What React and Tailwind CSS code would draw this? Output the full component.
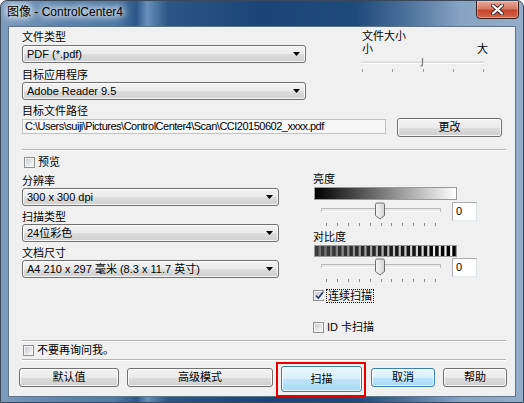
import React from 'react'

const btn =
  'border border-[#707070] rounded-[3px] bg-[linear-gradient(#f2f2f2_0%,#ebebeb_50%,#dddddd_51%,#cfcfcf_100%)] shadow-[inset_0_0_0_1px_rgba(255,255,255,0.8)]'
const blueBtn =
  'border border-[#3c7fb1] rounded-[3px] bg-[linear-gradient(#eaf6fd_0%,#d9f0fc_50%,#bee6fd_51%,#a7d9f5_100%)] shadow-[inset_0_0_0_1px_rgba(255,255,255,0.7)]'

function Combo({ text, className }) {
  return (
    <div className={`h-[18px] flex items-center justify-between pl-[4px] pr-[5px] ${btn} ${className}`}>
      <span className="leading-none">{text}</span>
      <svg width="7" height="4" viewBox="0 0 7 4">
        <path d="M0 0h7L3.5 4z" fill="#000" />
      </svg>
    </div>
  )
}

function Button({ children, className, blue }) {
  return (
    <div className={`flex items-center justify-center ${blue ? blueBtn : btn} ${className}`}>
      {children}
    </div>
  )
}

function Check({ checked }) {
  return (
    <div className="w-[11px] h-[11px] border border-[#8f8f8f] bg-[#f4f4f4] p-px flex shrink-0">
      <div className="flex-1 bg-[linear-gradient(135deg,#c9cdd2,#f7f7f7)] flex items-center justify-center">
        {checked && (
          <svg width="9" height="9" viewBox="0 0 9 9">
            <path d="M1 4.5l2.5 2.5L8 1" fill="none" stroke="#273a77" strokeWidth="1.6" />
          </svg>
        )}
      </div>
    </div>
  )
}

function Separator({ className }) {
  return <div className={`w-[484px] h-[2px] border-t border-[#b4b4b4] border-b border-b-white ${className}`} />
}

function Label({ children, className }) {
  return <div className={`leading-[14px] ${className}`}>{children}</div>
}

function Trackbar() {
  const ticks = Array.from({ length: 11 }, (_, i) => 13 + i * 10.9)
  return (
    <svg width="134" height="26" className="shrink-0">
      <rect x="8.5" y="6.5" width="119" height="3" fill="#e7eaea" stroke="#b9b9b9" />
      <line x1="9" y1="9.5" x2="127" y2="9.5" stroke="#fff" />
      {ticks.map((x) => (
        <line key={x} x1={Math.round(x) + 0.5} y1="21" x2={Math.round(x) + 0.5} y2="24" stroke="#8a8a8a" />
      ))}
      <defs>
        <linearGradient id="thumb" x1="0" x2="1">
          <stop offset="0" stopColor="#f6f6f6" />
          <stop offset="1" stopColor="#d4d4d4" />
        </linearGradient>
      </defs>
      <path d="M62.5 2.5q0-1.5 1.5-1.5h6q1.5 0 1.5 1.5v11l-4.5 3.5l-4.5-3.5z" fill="url(#thumb)" stroke="#6f6f6f" />
    </svg>
  )
}

function SizeSlider() {
  const ticks = [2, 32, 63, 93, 123]
  return (
    <svg width="126" height="20">
      <rect x="1" y="5.5" width="123" height="2" fill="#d8d8d8" />
      <line x1="1" y1="7.5" x2="124" y2="7.5" stroke="#fff" />
      {ticks.map((x) => (
        <line key={x} x1={x + 0.5} y1="13" x2={x + 0.5} y2="16" stroke="#9a9a9a" />
      ))}
      <path d="M62.5 2v6q0 2 -2 2" fill="none" stroke="#7a7a7a" strokeWidth="1.2" />
    </svg>
  )
}

function Stripes() {
  const n = 25
  const w = 143 / n
  return (
    <svg width="143" height="12" className="block">
      {Array.from({ length: n }, (_, i) => {
        const t = i / (n - 1)
        const dark = Math.round(60 - 60 * t)
        const light = Math.round(110 + 145 * t)
        return (
          <g key={i}>
            <rect x={i * w} y="0" width={w} height="12" fill={`rgb(${light},${light},${light})`} />
            <rect x={i * w} y="0" width={w * 0.62} height="12" fill={`rgb(${dark},${dark},${dark})`} />
          </g>
        )
      })}
    </svg>
  )
}

function NumBox() {
  return (
    <div className="ml-[5px] w-[25px] h-[19px] bg-white border border-[#abadb3] border-b-[#e3e9ef] border-r-[#dbdfe6] pl-[3px] flex items-center leading-none">
      0
    </div>
  )
}

export default function App() {
  return (
    <div className="w-[524px] h-[403px] overflow-hidden rounded-t-[7px] border border-[#3a4859] bg-[linear-gradient(90deg,#7d9bbd_0%,#5b83ad_12%,#4f7aa7_22%,#2c5889_26%,#6790bb_28%,#2a5585_32%,#1b4578_50%,#1f4a7c_68%,#4d729c_78%,#87a3c3_88%,#93adc9_100%)] font-['Liberation_Sans','Noto_Sans_CJK_SC',sans-serif] text-[11px] text-black flex flex-col">
      <div className="h-[25px] relative flex items-center pl-[6px] text-[12px] pb-[3px] [text-shadow:0_0_6px_#fff,0_0_8px_#fff,0_0_10px_#fff]">
        图像 - ControlCenter4
        <div className="absolute right-[4px] top-[-1px] w-[43px] h-[19px] rounded-b-[4px] border border-[#3a1f1a] bg-[linear-gradient(#e9a99a_0%,#d77a65_45%,#c2452c_55%,#d4674d_100%)] shadow-[inset_0_0_0_1px_rgba(255,255,255,0.35)] flex items-center justify-center">
          <svg width="13" height="11" viewBox="0 0 13 11">
            <path d="M2 1.5l9 8M11 1.5l-9 8" stroke="#3b2520" strokeWidth="4" strokeLinecap="round" />
            <path d="M2 1.5l9 8M11 1.5l-9 8" stroke="#fff" strokeWidth="2.2" strokeLinecap="round" />
          </svg>
        </div>
      </div>

      <div className="mx-[7px] h-[371px] border border-[#5f7389] bg-[#f0f0f0] flex flex-col">
        <div className="pl-[13px] pt-[3px] flex flex-col">
          <div className="flex">
            <div className="w-[284px] flex flex-col">
              <div className="h-[15px] leading-[15px]">文件类型</div>
              <Combo text="PDF (*.pdf)" className="w-[284px]" />
              <Label className="h-[19px] pt-[5px]">目标应用程序</Label>
              <Combo text="Adobe Reader 9.5" className="w-[284px]" />
            </div>
            <div className="ml-[54px] w-[130px] flex flex-col">
              <div className="leading-[13px] pl-[2px]">文件大小</div>
              <div className="leading-[13px] px-[2px] flex justify-between">
                <span>小</span>
                <span>大</span>
              </div>
              <SizeSlider />
            </div>
          </div>
          <Label className="h-[18px] pt-[4px]">目标文件路径</Label>
          <div className="flex h-[19px]">
            <div className="mt-[1px] h-[15px] w-[364px] bg-[#f7f7f7] border border-[#c2c2c2] pl-[2px] flex items-center leading-none tracking-[-0.5px] whitespace-nowrap overflow-hidden">
              C:\Users\suiji\Pictures\ControlCenter4\Scan\CCI20150602_xxxx.pdf
            </div>
            <Button className="ml-[11px] w-[105px] h-[19px]">更改</Button>
          </div>
          <Separator className="mt-[12px]" />
        </div>

        <div className="pl-[13px] flex">
          <div className="w-[257px] flex flex-col">
            <div className="mt-[6px] h-[11px] flex items-center pl-[2px] gap-[3px]">
              <Check />
              <span className="leading-none">预览</span>
            </div>
            <Label className="h-[20px] pt-[6px]">分辨率</Label>
            <Combo text="300 x 300 dpi" className="w-[257px]" />
            <Label className="h-[18px] pt-[4px]">扫描类型</Label>
            <Combo text="24位彩色" className="w-[257px]" />
            <Label className="h-[18px] pt-[4px]">文档尺寸</Label>
            <Combo text="A4 210 x 297 毫米 (8.3 x 11.7 英寸)" className="w-[257px]" />
          </div>
          <div className="ml-[34px] flex flex-col">
            <Label className="pt-[21px]">亮度</Label>
            <div className="ml-[1px] mt-[1px] h-[13px] w-[143px] border border-[#9a9a9a] bg-[linear-gradient(90deg,#000,#fff)]" />
            <div className="mt-[2px] h-[26px] flex items-start">
              <Trackbar />
              <NumBox />
            </div>
            <Label className="pt-[2px]">对比度</Label>
            <div className="ml-[1px] mt-[1px] h-[12px] w-[143px] border border-[#9a9a9a] overflow-hidden">
              <Stripes />
            </div>
            <div className="mt-[1px] h-[26px] flex items-start">
              <Trackbar />
              <NumBox />
            </div>
            <div className="mt-[6px] h-[11px] flex items-center gap-[2px]">
              <Check checked />
              <span className="leading-[12px] border border-dotted border-black px-px">连续扫描</span>
            </div>
            <div className="mt-[21px] h-[11px] flex items-center gap-[3px]">
              <Check />
              <span className="leading-none">ID 卡扫描</span>
            </div>
          </div>
        </div>

        <Separator className="ml-[13px] mt-[7px]" />
        <div className="pl-[14px] mt-[3px] h-[11px] flex items-center gap-[3px]">
          <Check />
          <span className="leading-none">不要再询问我。</span>
        </div>
        <Separator className="ml-[13px] mt-[3px]" />

        <div className="pl-[10px] mt-[1px] flex items-start">
          <Button className="mt-[6px] w-[100px] h-[19px]">默认值</Button>
          <Button className="mt-[6px] ml-[8px] w-[146px] h-[19px]">高级模式</Button>
          <div className="ml-[3px] border-2 border-[#e60000] pt-[2px] pl-[3px] pr-[2px] pb-[3px]">
            <Button blue className="w-[81px] h-[26px] border-[#2c628b]">扫描</Button>
          </div>
          <Button blue className="mt-[6px] ml-[5px] w-[64px] h-[19px]">取消</Button>
          <Button className="mt-[6px] ml-[8px] w-[64px] h-[19px]">帮助</Button>
        </div>
      </div>
    </div>
  )
}
